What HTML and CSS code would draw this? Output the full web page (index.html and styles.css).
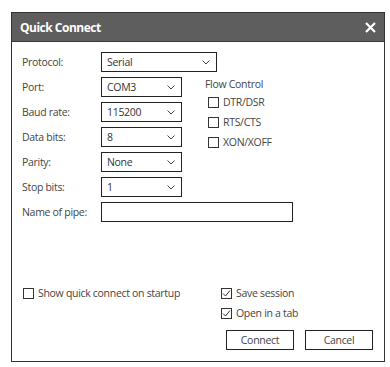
FILE: index.html
```html
<!DOCTYPE html>
<html lang="en">

<head>
  <meta charset="UTF-8">
  <meta name="viewport" content="width=device-width, initial-scale=1.0">
  <title>Quick Connect</title>
  <link rel="stylesheet" href="styles.css">
</head>

<body>
  <div class="dialog">
    <div class="titleBar">
      <span class="title">Quick Connect</span>
      <svg class="closeIcon" width="11" height="11" viewBox="0 0 11 11">
        <path d="M1 1 L10 10 M10 1 L1 10" stroke="#fff" stroke-width="2.2" fill="none" />
      </svg>
    </div>

    <div class="form">
      <label class="fieldLabel">Protocol:</label>
      <div class="select wide">Serial<svg class="chevron" width="8" height="5" viewBox="0 0 8 5"><path d="M0.5 0.5 L4 4 L7.5 0.5" stroke="#444" fill="none" /></svg></div>

      <label class="fieldLabel">Port:</label>
      <div class="select">COM3<svg class="chevron" width="8" height="5" viewBox="0 0 8 5"><path d="M0.5 0.5 L4 4 L7.5 0.5" stroke="#444" fill="none" /></svg></div>

      <div class="flowControl">
        <div class="flowTitle">Flow Control</div>
        <div class="option"><span class="checkbox"></span>DTR/DSR</div>
        <div class="option"><span class="checkbox"></span>RTS/CTS</div>
        <div class="option"><span class="checkbox"></span>XON/XOFF</div>
      </div>

      <label class="fieldLabel">Baud rate:</label>
      <div class="select">115200<svg class="chevron" width="8" height="5" viewBox="0 0 8 5"><path d="M0.5 0.5 L4 4 L7.5 0.5" stroke="#444" fill="none" /></svg></div>

      <label class="fieldLabel">Data bits:</label>
      <div class="select">8<svg class="chevron" width="8" height="5" viewBox="0 0 8 5"><path d="M0.5 0.5 L4 4 L7.5 0.5" stroke="#444" fill="none" /></svg></div>

      <label class="fieldLabel">Parity:</label>
      <div class="select">None<svg class="chevron" width="8" height="5" viewBox="0 0 8 5"><path d="M0.5 0.5 L4 4 L7.5 0.5" stroke="#444" fill="none" /></svg></div>

      <label class="fieldLabel">Stop bits:</label>
      <div class="select">1<svg class="chevron" width="8" height="5" viewBox="0 0 8 5"><path d="M0.5 0.5 L4 4 L7.5 0.5" stroke="#444" fill="none" /></svg></div>

      <label class="fieldLabel">Name of pipe:</label>
      <div class="textInput"></div>
    </div>

    <div class="footer">
      <div class="option startup"><span class="checkbox"></span>Show quick connect on startup</div>
      <div class="rightColumn">
        <div class="option"><span class="checkbox checked"><svg width="9" height="9" viewBox="0 0 9 9"><path d="M1 4.5 L3.5 7 L8 1.5" stroke="#333" fill="none" /></svg></span>Save session</div>
        <div class="option"><span class="checkbox checked"><svg width="9" height="9" viewBox="0 0 9 9"><path d="M1 4.5 L3.5 7 L8 1.5" stroke="#333" fill="none" /></svg></span>Open in a tab</div>
        <div class="buttons">
          <button class="btn">Connect</button>
          <button class="btn">Cancel</button>
        </div>
      </div>
    </div>
  </div>
</body>

</html>
```
FILE: styles.css
```css
/* Base styles */
body {
  font-family: "Open Sans", "Noto Sans", Arial, sans-serif;
  font-size: 10.5px;
  letter-spacing: -0.3px;
  color: #444;
  margin: 0;
  padding: 0;
  background-color: #fff;
}

.dialog {
  width: 372px;
  height: 348px;
  margin: 12px 0 0 11px;
  border: 1px solid #333;
  display: flex;
  flex-direction: column;
}

/* Title bar */
.titleBar {
  height: 28px;
  background-color: #5e5e5e;
  border-bottom: 1px solid #3a3a3a;
  display: flex;
  align-items: center;
  justify-content: space-between;
  padding: 0 8px 0 8px;
}

.title {
  color: #fff;
  font-weight: bold;
  font-size: 12px;
  letter-spacing: -0.5px;
}

/* Form grid */
.form {
  display: grid;
  grid-template-columns: 79px 81px 1fr;
  grid-auto-rows: 20px;
  row-gap: 5px;
  padding: 10px 0 0 10px;
}

.fieldLabel {
  grid-column: 1;
  display: flex;
  align-items: center;
}

.select {
  grid-column: 2;
  border: 1px solid #222;
  display: flex;
  align-items: center;
  justify-content: space-between;
  padding: 0 6px 0 5px;
  color: #333;
}

.select.wide {
  grid-column: 2 / span 2;
  width: 103px;
}

.chevron {
  margin-top: 1px;
}

.textInput {
  grid-column: 2 / span 2;
  width: 190px;
  border: 1px solid #222;
}

/* Flow control */
.flowControl {
  grid-column: 3;
  grid-row: 2 / span 4;
  padding: 0 0 0 23px;
}

.flowTitle {
  margin-top: 0;
  margin-bottom: 1px;
}

.flowControl .option {
  margin-left: 3px;
  height: 20px;
}

.option {
  display: flex;
  align-items: center;
}

.checkbox {
  width: 11px;
  height: 11px;
  border: 1px solid #333;
  margin-right: 4px;
  display: flex;
  align-items: center;
  justify-content: center;
  box-sizing: border-box;
  flex-shrink: 0;
}

/* Footer */
.footer {
  margin-top: auto;
  display: flex;
  padding: 0 11px 11px 11px;
}

.startup {
  flex: 1;
  align-self: flex-start;
  height: 20px;
}

.rightColumn {
  width: 152px;
}

.rightColumn .option {
  height: 20px;
}

.buttons {
  display: flex;
  justify-content: flex-end;
  gap: 11px;
  margin-top: 7px;
}

.btn {
  width: 68px;
  height: 20px;
  border: 1px solid #222;
  background-color: #fff;
  font-family: inherit;
  font-size: 10.5px;
  letter-spacing: -0.3px;
  color: #444;
  padding: 0;
}
```
